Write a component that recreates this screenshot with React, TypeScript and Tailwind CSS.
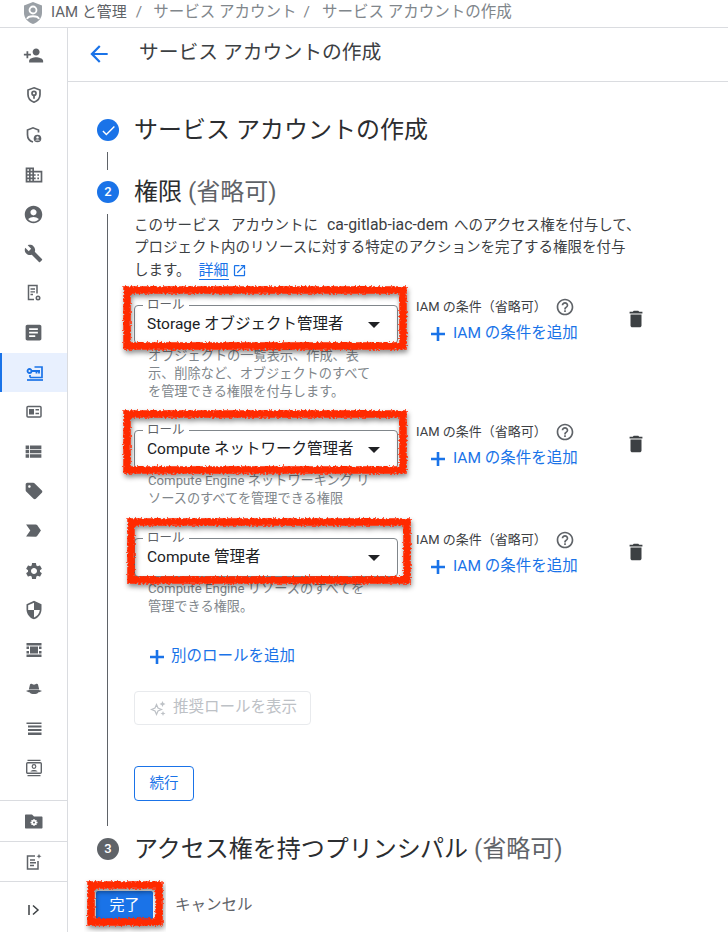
import React from "react";
import {
  MdAccountCircle,
  MdArrowBack,
  MdArticle,
  MdBuild,
  MdCheck,
  MdDelete,
  MdHelpOutline,
  MdLabelImportant,
  MdOpenInNew,
  MdOutlineDomain,
  MdPersonAdd,
  MdSecurity,
  MdSell,
  MdSettings,
  MdViewList,
} from "react-icons/md";

const GRAY = "#5f6368";

// small hand drawn glyphs for the console nav, react-icons has no close match
const ShieldKey = () => (
  <svg width="18" height="18" viewBox="0 0 18 18" fill="none" stroke={GRAY} strokeWidth="1.7">
    <path d="M9 1.800 15 4v4.600c0 3.700-2.500 6.400-6 7.600-3.500-1.200-6-3.900-6-7.600V4z" />
    <circle cx="9" cy="7.300" r="2" />
    <path d="M9 9.300v3.400" />
  </svg>
);
const ShieldPerson = () => (
  <svg width="18" height="18" viewBox="0 0 18 18" fill="none">
    <path d="M8 16C4.800 15 2.500 12.200 2.500 8.700V4L8 1.800 13.500 4v2.500" stroke={GRAY} strokeWidth="1.700" />
    <circle cx="12.500" cy="12.500" r="3.800" fill={GRAY} />
    <circle cx="12.500" cy="11.400" r="1.200" fill="#fff" />
    <path d="M10.300 14.500c.8-1.200 3.600-1.200 4.400 0z" fill="#fff" />
  </svg>
);
const DocGear = () => (
  <svg width="18" height="18" viewBox="0 0 18 18" fill="none">
    <path d="M9 15.500H3.500v-14h8.500v8" stroke={GRAY} strokeWidth="1.500" />
    <path d="M5.500 5h4.500M5.500 7.800h4.500M5.500 10.500h2.500" stroke={GRAY} strokeWidth="1.300" />
    <circle cx="13" cy="14" r="2.500" fill={GRAY} />
    <circle cx="13" cy="14" r="0.900" fill="#fff" />
  </svg>
);
const ScreenKey = () => (
  <svg width="18" height="18" viewBox="0 0 18 18" fill="none" stroke="#1a73e8">
    <path d="M1 16h16" strokeWidth="1.700" />
    <path d="M4 13.500V11M8.500 3H16v10.500H4" strokeWidth="1.700" />
    <circle cx="3.500" cy="7" r="2" strokeWidth="1.800" />
    <path d="M5.500 7H14M10.500 7v2.500M13 7v2.500" strokeWidth="1.800" />
  </svg>
);
const CardIcon = () => (
  <svg width="18" height="18" viewBox="0 0 18 18" fill="none">
    <rect x="2" y="3.500" width="14" height="10.500" rx="1" stroke={GRAY} strokeWidth="1.500" />
    <rect x="4" y="6" width="5" height="5.500" fill={GRAY} />
    <path d="M10.500 6.800H14M10.500 10.500H14" stroke={GRAY} strokeWidth="1.500" />
  </svg>
);
const FilmIcon = () => (
  <svg width="18" height="18" viewBox="0 0 18 18" fill={GRAY}>
    <rect x="1.500" y="2" width="15" height="2.500" />
    <rect x="1.500" y="13.500" width="15" height="2.500" />
    <rect x="5" y="5.500" width="8" height="7" />
    <rect x="1.500" y="5.500" width="2.500" height="2.500" />
    <rect x="14" y="5.500" width="2.500" height="2.500" />
    <rect x="1.500" y="10" width="2.500" height="2.500" />
    <rect x="14" y="10" width="2.500" height="2.500" />
  </svg>
);
const HatIcon = () => (
  <svg width="18" height="18" viewBox="0 0 18 18" fill={GRAY}>
    <path d="M3.800 9.500 5 4.500c.3-1 1.300-1 2-.6L9 4.700l2-.8c.7-.4 1.700-.4 2 .6l1.200 5z" />
    <path d="M1 11c1.500-.9 3.200-1.100 3.700-1.100h8.600c.5 0 2.200.2 3.700 1.100-1.700 1-2.800 1.200-3.500 1.200-1 1.500-2.800 1.800-4.500 1.800s-3.500-.3-4.500-1.800c-.7 0-1.800-.2-3.500-1.200z" />
  </svg>
);
const LinesIcon = () => (
  <svg width="18" height="18" viewBox="0 0 18 18" fill={GRAY}>
    <rect x="1.500" y="2.500" width="15" height="1.500" />
    <rect x="3" y="5.500" width="13.500" height="2" />
    <rect x="3" y="9" width="13.500" height="2" />
    <rect x="3" y="12.500" width="13.500" height="2.500" />
  </svg>
);
const ScreenPerson = () => (
  <svg width="18" height="18" viewBox="0 0 18 18" fill="none">
    <path d="M2.500 1.300h13M2.500 16.700h13" stroke={GRAY} strokeWidth="1.300" />
    <rect x="1.700" y="3.800" width="14.600" height="10.400" rx="1" stroke={GRAY} strokeWidth="1.400" />
    <circle cx="9" cy="7.500" r="1.800" fill="none" stroke={GRAY} strokeWidth="1.200" />
    <path d="M5.500 12.500c.5-2 6.500-2 7 0z" fill={GRAY} />
  </svg>
);
const FolderGear = () => (
  <svg width="20" height="18" viewBox="0 0 20 18">
    <path d="M2 2.500h6l2 2h7.500c.6 0 1 .4 1 1v10c0 .6-.4 1-1 1H2c-.6 0-1-.4-1-1v-12c0-.6.4-1 1-1z" fill={GRAY} />
    <circle cx="10" cy="10.500" r="2.600" fill="#fff" />
    <path d="M10 7v7M6.500 10.500h7M7.600 8.100l4.800 4.800M12.400 8.100l-4.800 4.800" stroke="#fff" strokeWidth="1.300" />
    <circle cx="10" cy="10.500" r="1" fill={GRAY} />
  </svg>
);
const DocSpark = () => (
  <svg width="18" height="18" viewBox="0 0 18 18" fill="none">
    <path d="M10 3H2.500v13h10.500V8" stroke={GRAY} strokeWidth="1.500" />
    <path d="M5 7h5M5 9.800h6M5 12.500h4" stroke={GRAY} strokeWidth="1.400" />
    <path d="M14 .8l.7 1.800 1.800.7-1.800.7-.7 1.800-.7-1.800-1.800-.7 1.800-.7z" fill={GRAY} />
  </svg>
);
const CollapseIcon = () => (
  <svg width="14" height="14" viewBox="0 0 14 14" fill="none" stroke="#3c4043" strokeWidth="1.500">
    <path d="M2 2v10M6 2.500 11 7l-5 4.500" />
  </svg>
);
const Sparkles = () => (
  <svg width="17" height="17" viewBox="0 0 17 17" fill="none">
    <path d="M6.500 4.500 8 8l3.500 1.500L8 11l-1.500 3.500L5 11 1.500 9.500 5 8z" stroke="#bdc1c6" strokeWidth="1.200" />
    <path d="M12.500 1l.9 2.100 2.100.9-2.100.9-.9 2.100-.9-2.100-2.100-.9 2.100-.9zM13 11l.7 1.800 1.800.7-1.800.7L13 16l-.7-1.800-1.800-.7 1.800-.7z" fill="#bdc1c6" />
  </svg>
);
const PlusIcon = () => (
  <svg width="24" height="24" viewBox="0 0 24 24" fill="none" stroke="currentColor" strokeWidth="2.600" className="shrink-0">
    <path d="M12 5v14M5 12h14" />
  </svg>
);

const navIcons = [
  <MdPersonAdd size={21} color={GRAY} />,
  <ShieldKey />,
  <ShieldPerson />,
  <MdOutlineDomain size={20} color={GRAY} />,
  <MdAccountCircle size={21} color={GRAY} />,
  <MdBuild size={19} color={GRAY} />,
  <DocGear />,
  <MdArticle size={21} color={GRAY} />,
  <ScreenKey />,
  <CardIcon />,
  <MdViewList size={21} color={GRAY} />,
  <MdSell size={20} color={GRAY} />,
  <MdLabelImportant size={21} color={GRAY} />,
  <MdSettings size={20} color={GRAY} />,
  <MdSecurity size={20} color={GRAY} />,
  <FilmIcon />,
  <HatIcon />,
  <LinesIcon />,
  <ScreenPerson />,
];

// hand drawn red marker round the important fields
function RedFrame({ id, width, height, className }: { id: string; width: number; height: number; className: string }) {
  return (
    <svg
      width={width}
      height={height}
      viewBox={`0 0 ${width} ${height}`}
      className={`absolute pointer-events-none overflow-visible ${className}`}
    >
      <filter id={id} x="-10%" y="-30%" width="120%" height="160%">
        <feTurbulence type="fractalNoise" baseFrequency="0.5" numOctaves="2" seed="4" />
        <feDisplacementMap in="SourceGraphic" scale="5" xChannelSelector="R" yChannelSelector="G" />
        <feDropShadow dx="1" dy="3" stdDeviation="2.500" floodColor="#000" floodOpacity="0.45" />
      </filter>
      <rect
        x="4"
        y="4"
        width={width - 8}
        height={height - 8}
        fill="none"
        stroke="#ff2a00"
        strokeWidth="7.500"
        filter={`url(#${id})`}
      />
    </svg>
  );
}

type Role = { name: string; help: string[]; rowClass: string; frameClass: string; frameW: number; frameH: number };

const roles: Role[] = [
  {
    name: "Storage オブジェクト管理者",
    help: ["オブジェクトの一覧表示、作成、表", "示、削除など、オブジェクトのすべて", "を管理できる権限を付与します。"],
    rowClass: "h-[125px]",
    frameClass: "-left-[11px] -top-[12px]",
    frameW: 284,
    frameH: 64,
  },
  {
    name: "Compute ネットワーク管理者",
    help: ["Compute Engine ネットワーキング リ", "ソースのすべてを管理できる権限"],
    rowClass: "h-[108px]",
    frameClass: "-left-[11px] -top-[13px]",
    frameW: 284,
    frameH: 64,
  },
  {
    name: "Compute 管理者",
    help: ["Compute Engine リソースのすべてを", "管理できる権限。"],
    rowClass: "h-[109px]",
    frameClass: "-left-[7px] -top-[13px]",
    frameW: 284,
    frameH: 66,
  },
];

function RoleRow({ role, index }: { role: Role; index: number }) {
  return (
    <div className={`relative flex items-start ${role.rowClass}`}>
      <div className="w-[264px] pt-[7px]">
        <div className="relative h-[39px] rounded-[4px] border border-[#80868b] flex items-center justify-between pl-[12px] pr-[17px]">
          <span className="absolute left-[8px] -top-[8px] bg-white px-[4px] text-[12.5px] leading-[14px] text-[#5f6368]">
            ロール
          </span>
          <span className="text-[15.5px] text-[#202124] whitespace-nowrap">{role.name}</span>
          <span className="w-0 h-0 border-x-[6px] border-x-transparent border-t-[6px] border-t-[#202124]" />
        </div>
        <div className="mt-[3px] pl-[14px] text-[13.2px] leading-[18px] text-[#80868b] whitespace-nowrap">
          {role.help.map((line) => (
            <div key={line}>{line}</div>
          ))}
        </div>
      </div>
      <div className="ml-[18px] w-[190px]">
        <div className="flex items-center h-[18px] text-[13px] text-[#3c4043] whitespace-nowrap">
          IAM の条件（省略可）
          <MdHelpOutline size={20} color={GRAY} className="ml-[8px]" />
        </div>
        <div className="mt-[8px] h-[20px] pl-[10px] flex items-center gap-[3px] text-[15.5px] text-[#1a73e8] whitespace-nowrap">
          <PlusIcon />
          IAM の条件を追加
        </div>
      </div>
      <MdDelete size={22} color="#3c4043" className="ml-[19px] mt-[10px]" />
      <RedFrame id={`frame-${index}`} width={role.frameW} height={role.frameH} className={role.frameClass} />
    </div>
  );
}

export default function App() {
  return (
    <div className="w-[728px] h-[932px] overflow-hidden bg-white font-[family-name:Roboto,'Noto_Sans_CJK_JP',sans-serif]">
      {/* Breadcrumb bar */}
      <div className="h-[28px] border-b border-[#dadce0] flex items-center pl-[23px] text-[15.5px] text-[#80868b] whitespace-nowrap">
        <svg width="20" height="24" viewBox="0 0 20 24" className="-mt-[2px]">
          <path d="M10 1 19 4.500v7.500c0 5-3.700 9-9 11-5.300-2-9-6-9-11V4.500z" fill="#9aa0a6" />
          <circle cx="10" cy="9" r="3.500" fill="none" stroke="#fff" strokeWidth="1.800" />
          <path d="M4 18c1-3.700 11-3.700 12 0" fill="none" stroke="#fff" strokeWidth="1.800" />
        </svg>
        <span className="ml-[8px] -mt-[2px] text-[15px] text-[#5f6368]">IAM と管理</span>
        <span className="ml-[9px] -mt-[2px]">/</span>
        <span className="ml-[11px] -mt-[2px]">サービス アカウント</span>
        <span className="ml-[7px] -mt-[2px]">/</span>
        <span className="ml-[12px] -mt-[2px]">サービス アカウントの作成</span>
      </div>

      <div className="flex h-[904px]">
        {/* Side nav */}
        <div className="w-[68px] shrink-0 border-r border-[#dadce0] flex flex-col">
          <div className="pt-[8px] h-[772px]">
            {navIcons.map((icon, i) => (
              <div
                key={i}
                className={`h-[39.6px] flex items-center justify-center ${
                  i === 8 ? "bg-[#e8f0fe] border-l-[2px] border-[#1a73e8]" : ""
                }`}
              >
                {icon}
              </div>
            ))}
          </div>
          <div className="h-[41px] border-t border-[#dadce0] flex items-center justify-center">
            <FolderGear />
          </div>
          <div className="h-[40px] border-t border-[#dadce0] flex items-center justify-center">
            <DocSpark />
          </div>
          <div className="flex-1 border-t border-[#dadce0] flex items-center justify-center pt-[6px]">
            <CollapseIcon />
          </div>
        </div>

        <div className="flex-1 min-w-0">
          {/* Page title */}
          <div className="h-[54px] border-b border-[#dadce0] flex items-center pl-[18px]">
            <MdArrowBack size={26} color="#1a73e8" className="-mt-[2px]" />
            <span className="ml-[27px] -mt-[4px] text-[19.8px] text-[#3c4043] whitespace-nowrap">サービス アカウントの作成</span>
          </div>

          <div className="pl-[29px] pt-[26px]">
            {/* Step 1 */}
            <div className="h-[44px] flex items-center">
              <div className="w-[22px] h-[22px] rounded-full bg-[#1a73e8] flex items-center justify-center">
                <MdCheck size={17} color="#fff" />
              </div>
              <span className="ml-[15px] text-[24px] text-[#2b2d30] whitespace-nowrap">サービス アカウントの作成</span>
            </div>
            <div className="ml-[10px] h-[18px] border-l border-[#5f6368]" />

            {/* Step 2 */}
            <div className="h-[44px] flex items-center">
              <div className="w-[22px] h-[22px] rounded-full bg-[#1a73e8] flex items-center justify-center text-[13px] font-medium text-white">
                2
              </div>
              <span className="ml-[15px] text-[24px] text-[#2b2d30] whitespace-nowrap">
                権限 <span className="text-[#5f6368]">(省略可)</span>
              </span>
            </div>
            <div className="ml-[10px] border-l border-[#5f6368] pl-[26px] pb-[25px]">
              <p className="text-[14.5px] leading-[22px] text-[#3c4043] whitespace-nowrap">
                このサービス<span className="ml-[10px]">アカウントに</span>
                <span className="ml-[9px] mr-[6px] text-[15.8px]">ca-gitlab-iac-dem</span>
                へのアクセス権を付与して、
                <br />
                プロジェクト内のリソースに対する特定のアクションを完了する権限を付与
                <br />
                します。
                <span className="ml-[8px] border-b border-[#1a73e8] text-[15px] text-[#1a73e8]">詳細</span>
                <MdOpenInNew size={15} color="#1a73e8" className="inline ml-[3px] mb-[2px]" />
              </p>

              <div className="mt-[16px]">
                {roles.map((role, i) => (
                  <RoleRow key={role.name} role={role} index={i} />
                ))}
              </div>

              <div className="pl-[11px] mt-[2px] h-[30px] flex items-center gap-[2px] text-[15.5px] text-[#1a73e8]">
                <PlusIcon />
                別のロールを追加
              </div>

              <div className="mt-[19px] w-[177px] h-[34px] rounded-[4px] border border-[#e8eaed] flex items-center pl-[15px] gap-[6px] text-[15.5px] text-[#bdc1c6]">
                <Sparkles />
                推奨ロールを表示
              </div>

              <div className="mt-[41px] w-[60px] h-[35px] rounded-[4px] border border-[#1a73e8] flex items-center justify-center text-[14.5px] text-[#1a73e8]">
                続行
              </div>
            </div>

            {/* Step 3 */}
            <div className="h-[46px] flex items-center">
              <div className="w-[22px] h-[22px] rounded-full bg-[#5f6368] flex items-center justify-center text-[13px] font-medium text-white">
                3
              </div>
              <span className="ml-[15px] text-[24px] text-[#2b2d30] whitespace-nowrap">
                アクセス権を持つプリンシパル <span className="text-[#5f6368]">(省略可)</span>
              </span>
            </div>

            <div className="relative mt-[19px] -ml-[1px] flex items-center">
              <div className="w-[57px] h-[29px] rounded-[2px] bg-[#1a73e8] flex items-center justify-center text-[15px] text-white">
                完了
              </div>
              <span className="ml-[22px] pt-[1px] text-[15.5px] text-[#5f6368]">キャンセル</span>
              <RedFrame id="frame-done" width={76} height={45} className="-left-[9px] -top-[10px]" />
            </div>
          </div>
        </div>
      </div>
    </div>
  );
}
